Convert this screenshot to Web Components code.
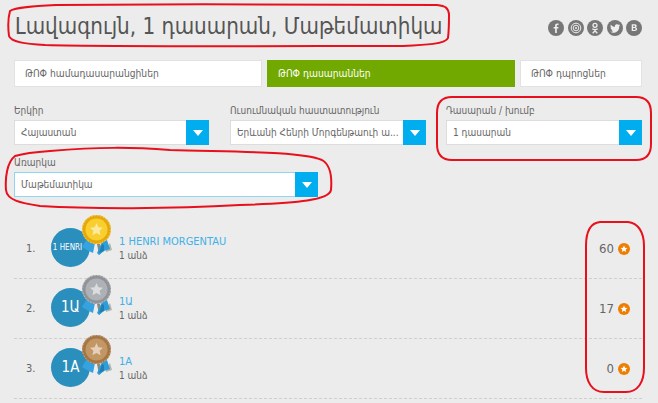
<!DOCTYPE html>
<html lang="hy">
<head>
<meta charset="utf-8">
<title>Լավագույն</title>
<style>
    html, body { margin: 0; padding: 0; }
    body {
        width: 658px;
        height: 403px;
        overflow: hidden;
        background: #ececec;
        color: #555;
        font-family: "DejaVu Sans Condensed", "DejaVu Sans", sans-serif;
        font-stretch: condensed;
        font-size: 10px;
    }
</style>
</head>
<body>
<x-board>
    <x-heading slot="heading">Լավագույն, 1 դասարան, Մաթեմատիկա</x-heading>
    <x-tab slot="tabs" style="width:248px">ԹՈՓ համադասարանցիներ</x-tab>
    <x-tab slot="tabs" active style="width:248px">ԹՈՓ դասարաններ</x-tab>
    <x-tab slot="tabs" style="width:122px">ԹՈՓ դպրոցներ</x-tab>
    <x-select slot="filters" style="width:195px" label="Երկիր">Հայաստան</x-select>
    <x-select slot="filters" style="width:196px;margin-left:1px" label="Ուսումնական հաստատություն">Երևանի Հենրի Մորգենթաուի ա...</x-select>
    <x-select slot="filters" style="width:196px" label="Դասարան / խումբ">1 դասարան</x-select>
    <x-select slot="subject" style="width:304px" label="Առարկա" focused>Մաթեմատիկա</x-select>
    <x-rank-row slot="rows" rank="1." badge="1 HENRI" small medal="gold" points="60">1 HENRI MORGENTAU</x-rank-row>
    <x-rank-row slot="rows" rank="2." badge="1Ա" medal="silver" points="17">1Ա</x-rank-row>
    <x-rank-row slot="rows" rank="3." badge="1A" medal="bronze" points="0">1A</x-rank-row>
</x-board>

<script>
const boardTemplate = document.createElement('template');
boardTemplate.innerHTML = `
  <style>
    :host { display: block; position: relative; width: 658px; height: 403px; overflow: hidden; }
    header { display: flex; justify-content: space-between; align-items: center; height: 56px; padding: 0 16px 0 15px; box-sizing: border-box; }
    .tabs { display: flex; gap: 5px; padding: 4px 16px 0 14px; }
    .filters { display: flex; gap: 20px; padding: 17px 16px 0 14px; }
    .subject { display: flex; padding: 11px 16px 0 14px; }
    .rows { padding: 22px 16px 0 14px; }
    .socials { display: flex; gap: 3.5px; }
    .socials svg { width: 16px; height: 16px; display: block; }
    .marks { position: absolute; left: 0; top: 0; pointer-events: none; }
  </style>
  <header>
    <slot name="heading"></slot>
    <div class="socials">
      <svg viewBox="0 0 16 16"><circle cx="8" cy="8" r="8" fill="#777"/><path d="M8.800 13V8.600h1.500l.2-1.700H8.800V5.900c0-.5.2-.8.8-.8h.9V3.600c-.2 0-.7-.1-1.300-.1-1.300 0-2.100.8-2.100 2.200v1.200H5.600v1.700h1.500V13z" fill="#eee"/></svg>
      <svg viewBox="0 0 16 16"><circle cx="8" cy="8" r="8" fill="#777"/><circle cx="8" cy="8" r="4.800" fill="none" stroke="#eee" stroke-width="1"/><circle cx="8" cy="8" r="2.800" fill="none" stroke="#eee" stroke-width="1"/><circle cx="8" cy="8" r="1" fill="#eee"/></svg>
      <svg viewBox="0 0 16 16"><circle cx="8" cy="8" r="8" fill="#777"/><circle cx="8" cy="5.300" r="2" fill="none" stroke="#eee" stroke-width="1.300"/><path d="M5.300 8.800c1.700 1.100 3.700 1.100 5.400 0M8 9.800v1M5.700 13.200 8 10.800l2.300 2.400" fill="none" stroke="#eee" stroke-width="1.300"/></svg>
      <svg viewBox="0 0 16 16"><circle cx="8" cy="8" r="8" fill="#777"/><path d="M13 5.100c-.4.200-.8.300-1.200.3.400-.3.800-.7.900-1.100-.4.200-.9.400-1.300.5-.9-1-2.900-.6-3.400.7-.2.500-.1 1 0 1.300-1.700-.1-3.200-.9-4.200-2.100-.6 1-.3 2.200.6 2.800-.3 0-.7-.1-.9-.3 0 1.100.7 1.900 1.700 2.200-.3.100-.6.100-.9 0 .3.900 1.100 1.500 2 1.500-1 .7-2 1-3.100.9 3.900 2.500 9.300.3 9-5.500.4-.3.700-.6 1-1z" fill="#eee"/></svg>
      <svg viewBox="0 0 16 16"><circle cx="8" cy="8" r="8" fill="#777"/><path d="M5.700 4.200h3c1.300 0 2 .6 2 1.700 0 .8-.4 1.300-1 1.500.9.200 1.400.8 1.400 1.700 0 1.300-.9 2-2.300 2H5.700zm1.500 1.200v1.500h1.200c.5 0 .8-.3.8-.8s-.3-.7-.8-.7zm0 2.700v1.800h1.400c.6 0 1-.3 1-.9s-.4-.9-1-.9z" fill="#eee"/></svg>
    </div>
  </header>
  <div class="tabs"><slot name="tabs"></slot></div>
  <div class="filters"><slot name="filters"></slot></div>
  <div class="subject"><slot name="subject"></slot></div>
  <div class="rows"><slot name="rows"></slot></div>
  <svg class="marks" width="658" height="403" fill="none" stroke="#e8101c" stroke-width="2">
    <path d="M56 5C180 4 330 4 437 5C446 6 448 8 449 14C449 22 449 30 448 38C446 44 425 45 403 46C300 46 120 47 45 45C25 44 11 42 9 36C8 28 8 18 10 11C15 7 35 6 56 5Z"/>
    <path d="M452 97H636C646 97 651 103 651 113V144C651 154 646 160 636 160H452C442 160 437 154 437 144V113C437 103 442 97 452 97Z"/>
    <path d="M50 151C100 147 130 147 170 150C230 152 300 151 322 160C331 165 332 178 331 190C329 200 300 203 240 205C170 209 90 209 40 206C20 203 7 200 6 190C5 178 7 162 15 156C25 153 35 152 50 151Z"/>
    <path d="M600 222H628C638 223 644 232 644 246V368C644 382 638 392 626 392H604C592 392 586 382 586 368V246C586 232 590 223 600 222Z"/>
  </svg>
`;

class Board extends HTMLElement {
    constructor() {
        super();
        this.attachShadow({ mode: 'open' }).appendChild(boardTemplate.content.cloneNode(true));
    }
}

class Heading extends HTMLElement {
    constructor() {
        super();
        this.attachShadow({ mode: 'open' }).innerHTML = `
          <style>
            :host { display: block; font-size: 22.200px; color: #555; white-space: nowrap; margin-top: -4px; }
          </style>
          <slot></slot>`;
    }
}

class Tab extends HTMLElement {
    constructor() {
        super();
        this.attachShadow({ mode: 'open' }).innerHTML = `
          <style>
            :host { display: flex; align-items: center; box-sizing: border-box; height: 27px; padding-left: 10px; background: #fff; border: 1px solid #e2e2e2; color: #666; font-size: 10.200px; white-space: nowrap; }
            :host([active]) { background: #72a900; border-color: #72a900; color: #fff; }
          </style>
          <slot></slot>`;
    }
}

class Select extends HTMLElement {
    constructor() {
        super();
        this.attachShadow({ mode: 'open' }).innerHTML = `
          <style>
            :host { display: block; color: #666; font-size: 10px; }
            .label { height: 16px; line-height: 13px; white-space: nowrap; }
            .box { display: flex; height: 25px; box-sizing: border-box; background: #fff; border: 1px solid #ddd; border-right: 0; }
            :host([focused]) .box { border-color: #8fd6f2; }
            .text { flex: 1; display: flex; align-items: center; padding-left: 6px; overflow: hidden; white-space: nowrap; }
            .arrow { display: flex; align-items: center; justify-content: center; width: 23px; margin: -1px 0; background: #00aeef; }
            .arrow i { width: 0; height: 0; border: 5px solid transparent; border-top: 6px solid #fff; border-bottom: 0; }
          </style>
          <div class="label"></div>
          <div class="box"><div class="text"><slot></slot></div><div class="arrow"><i></i></div></div>`;
        this.shadowRoot.querySelector('.label').textContent = this.getAttribute('label');
    }
}

const medalColors = {
    gold: ['#f8cf2e', '#e5a70c', '#f7d75e'],
    silver: ['#aeb2b7', '#8f9398', '#c4c8cc'],
    bronze: ['#c39765', '#a37646', '#d4ae84']
};

class Medal extends HTMLElement {
    static get observedAttributes() { return ['kind']; }

    constructor() {
        super();
        this.attachShadow({ mode: 'open' });
    }

    attributeChangedCallback(attrName, oldValue, newValue) {
        const c = medalColors[newValue];
        this.shadowRoot.innerHTML = `
          <style>
            :host { display: block; width: 30px; height: 42px; }
            svg { display: block; }
          </style>
          <svg width="30" height="42" viewBox="0 0 30 42">
            <path d="M10 29l5 0 2 11 3-3-2-8z" fill="#8a8a80"/>
            <path d="M28 28l2 7-6 2 0-3z" fill="#b5b5a8"/>
            <path d="M0 32l5-8 8 4-2 10-6-3z" fill="#35a3e0"/>
            <path d="M15 38l5-11 5-2 3 9-6 2-5 4z" fill="#2e9edb"/>
            <path d="M17 38l3-9 2 1 0 6z" fill="#1f7fb0"/>
            <circle cx="14.500" cy="14.500" r="14.500" fill="${c[1]}"/>
            <circle cx="14.500" cy="14.500" r="11" fill="${c[0]}"/>
            <circle cx="14.500" cy="14.500" r="14" fill="none" stroke="${c[2]}" stroke-width="1" stroke-dasharray="1.500 1.500"/>
            <path d="M14.500 8l1.900 4.200 4.600.5-3.400 3.100 1 4.500-4.100-2.300-4.100 2.300 1-4.500-3.400-3.100 4.600-.5z" fill="#fff" opacity=".55"/>
          </svg>`;
    }
}

class RankRow extends HTMLElement {
    constructor() {
        super();
        this.attachShadow({ mode: 'open' }).innerHTML = `
          <style>
            :host { display: flex; align-items: center; box-sizing: border-box; height: 60px; border-bottom: 1px dashed #cfcfcf; color: #666; }
            .rank { width: 37px; padding-left: 12px; box-sizing: border-box; font-size: 11px; }
            .avatar { position: relative; width: 68px; height: 56px; flex: none; }
            .badge { position: absolute; left: 0; top: 7px; width: 39px; height: 39px; border-radius: 50%; background: #2b8fbd; color: #fff; display: flex; align-items: center; justify-content: center; font-size: 15px; white-space: nowrap; }
            :host([small]) .badge { font-size: 8px; box-sizing: border-box; padding-right: 6px; }
            x-medal { position: absolute; left: 31px; top: -6px; }
            .info { flex: 1; }
            .name { color: #3fb0e8; line-height: 14px; font-size: 11px; }
            .count { line-height: 13px; }
            .points { display: flex; align-items: center; gap: 4px; font-size: 13px; color: #666; margin-right: 12px; }
            .star { display: block; }
          </style>
          <div class="rank"></div>
          <div class="avatar"><div class="badge"></div><x-medal></x-medal></div>
          <div class="info"><div class="name"><slot></slot></div><div class="count">1 անձ</div></div>
          <div class="points"><span class="value"></span>
            <svg class="star" width="12" height="12" viewBox="0 0 12 12"><circle cx="6" cy="6" r="6" fill="#ef7d00"/><path d="M6 2.500l1 2.300 2.500.2-1.900 1.600.6 2.500L6 7.800 3.800 9.100l.6-2.500L2.500 5 5 4.800z" fill="#fff"/></svg>
          </div>`;
        const root = this.shadowRoot;
        root.querySelector('.rank').textContent = this.getAttribute('rank');
        root.querySelector('.badge').textContent = this.getAttribute('badge');
        root.querySelector('.value').textContent = this.getAttribute('points');
        root.querySelector('x-medal').setAttribute('kind', this.getAttribute('medal'));
    }
}

customElements.define('x-medal', Medal);
customElements.define('x-heading', Heading);
customElements.define('x-tab', Tab);
customElements.define('x-select', Select);
customElements.define('x-rank-row', RankRow);
customElements.define('x-board', Board);
</script>
</body>
</html>
